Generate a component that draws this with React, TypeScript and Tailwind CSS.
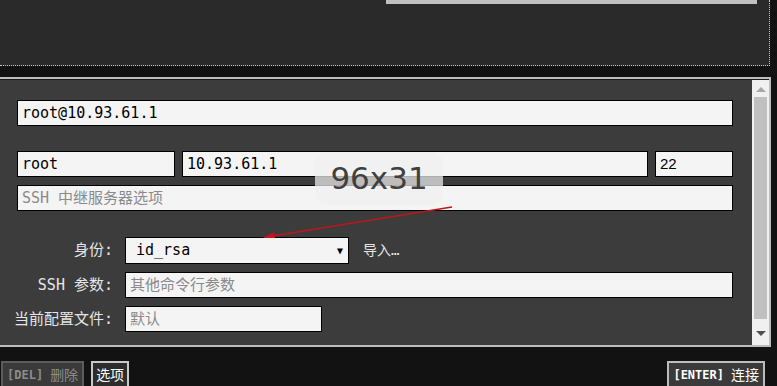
import React from 'react';

const mono = 'font-["DejaVu_Sans_Mono","Noto_Sans_CJK_SC",monospace]';

const Field = ({ value, placeholder, className = '' }: { value?: string; placeholder?: string; className?: string }) => (
  <div
    className={`h-[26px] bg-[#f4f4f4] border border-black flex items-center px-[4px] text-[15px] whitespace-nowrap overflow-hidden ${className}`}
  >
    {value ? <span className="text-black">{value}</span> : <span className="text-[#8a8a8a]">{placeholder}</span>}
  </div>
);

const Row = ({ label, children }: { label: string; children: React.ReactNode }) => (
  <div className="flex items-center gap-[12px]">
    <div className="w-[108px] -ml-[12px] text-right text-[15px] text-[#e6e6e6] whitespace-nowrap">{label}</div>
    {children}
  </div>
);

export default function App() {
  return (
    <div className={`relative w-[777px] h-[386px] bg-[#121212] overflow-hidden ${mono}`}>
      {/* upper terminal pane */}
      <div className="w-[770px] h-[66px] bg-[#2a2a2a] border-b border-r border-dotted border-[#c8c8c8]">
        <div className="ml-[386px] w-[371px] h-[4px] bg-[#c0c0c0]"></div>
      </div>

      {/* connection dialog */}
      <div className="mt-[11px] w-[771px] h-[270px] border-y-2 border-r-2 border-[#bdbdbd] flex">
        <div className="flex-1 bg-[#3c3c3c] border-t border-[#1a1a1a] pt-[20px] pl-[17px] pr-[19px]">
          <Field value="root@10.93.61.1" />

          <div className="flex gap-[7px] mt-[25px]">
            <Field value="root" className="w-[158px]" />
            <Field value="10.93.61.1" className="w-[466px]" />
            <Field value="22" className='flex-1 font-["Liberation_Sans",sans-serif]' />
          </div>
          <Field placeholder="SSH 中继服务器选项" className="mt-[8px]" />

          <div className="mt-[26px] flex flex-col gap-[8px]">
            <Row label="身份:">
              <div className="w-[224px] h-[27px] bg-[#f4f4f4] border border-black flex items-center justify-between pl-[10px] pr-[5px] text-[15px] text-black">
                <span>id_rsa</span>
                <span className="text-[10px]">▼</span>
              </div>
              <span className="ml-[2px] text-[14px] text-[#e6e6e6]">导入…</span>
            </Row>
            <Row label="SSH 参数:">
              <Field placeholder="其他命令行参数" className="flex-1" />
            </Row>
            <Row label="当前配置文件:">
              <Field placeholder="默认" className="w-[197px]" />
            </Row>
          </div>
        </div>

        {/* scrollbar */}
        <div className="w-[17px] bg-[#f0f0f0] border-t border-[#1a1a1a] flex flex-col items-center">
          <div className="mt-[7px] w-0 h-0 border-x-[5px] border-x-transparent border-b-[5px] border-b-[#a8a8a8]"></div>
          <div className="mt-[5px] w-[13px] h-[222px] bg-[#c0c0c0]"></div>
          <div className="mt-[12px] w-0 h-0 border-x-[5px] border-x-transparent border-t-[5px] border-t-[#505050]"></div>
        </div>
      </div>

      {/* footer buttons */}
      <div className="mt-[14px] flex items-start">
        <div className="ml-[1px] h-[28px] px-[4px] flex items-center gap-[7px] border-2 border-[#5c5c5c] bg-[#3a3a3a] text-[#8c8c8c]">
          <span className="text-[12px] font-bold">[DEL]</span>
          <span className="text-[14px]">删除</span>
        </div>
        <div className="ml-[7px] h-[28px] px-[3px] flex items-center border-2 border-[#c8c8c8] bg-[#2c2c2c] text-white text-[14px]">
          选项
        </div>
        <div className="ml-auto mr-[12px] h-[28px] px-[4px] flex items-center gap-[7px] border-2 border-[#bdbdbd] bg-[#3a3a3a] text-white">
          <span className="text-[12px] font-bold">[ENTER]</span>
          <span className="text-[14px]">连接</span>
        </div>
      </div>

      {/* size indicator overlay */}
      <div className='absolute left-[315px] top-[152px] w-[128px] h-[53px] rounded-[12px] bg-[rgba(240,240,240,0.72)] flex items-center justify-center text-[31px] text-[#404040] font-["DejaVu_Sans",sans-serif]'>
        96x31
      </div>

      {/* annotation arrow */}
      <svg className="absolute left-0 top-0 pointer-events-none" width="777" height="386">
        <line x1="452" y1="207" x2="272" y2="236" stroke="#c0141a" strokeWidth="1.3" />
        <polygon points="263,238 274,232 275,238" fill="#d0101a" />
      </svg>
    </div>
  );
}
